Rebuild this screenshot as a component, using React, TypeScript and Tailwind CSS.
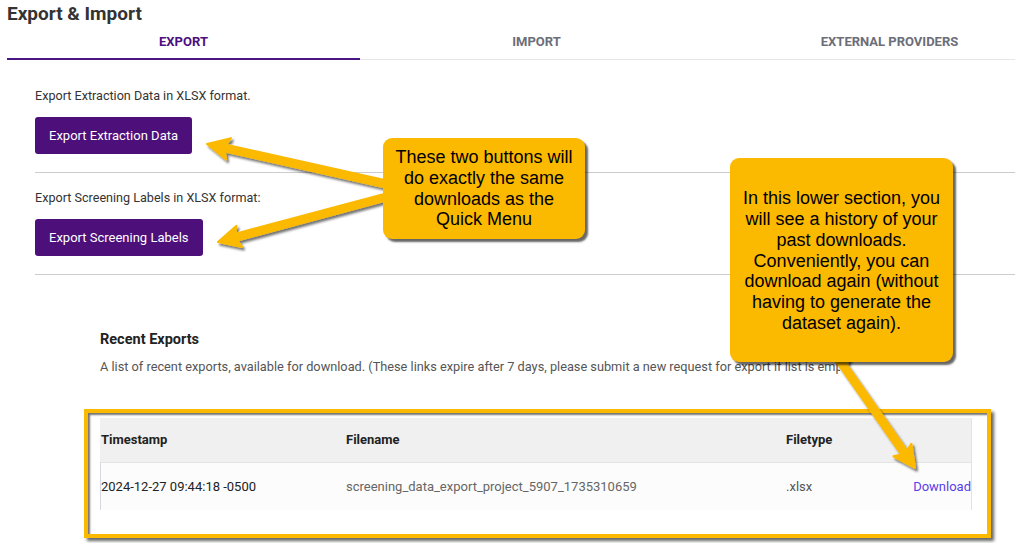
import React from "react";

const YELLOW = "#fbb900";

function arrowPoints(x1: number, y1: number, x2: number, y2: number, w = 3.5, hw = 11, hl = 19) {
  const len = Math.hypot(x2 - x1, y2 - y1);
  const dx = (x2 - x1) / len;
  const dy = (y2 - y1) / len;
  const nx = -dy;
  const ny = dx;
  const bx = x2 - dx * hl;
  const by = y2 - dy * hl;
  const pts = [
    [x1 + nx * w, y1 + ny * w],
    [bx + nx * w, by + ny * w],
    [bx + nx * hw - dx * 3, by + ny * hw - dy * 3],
    [x2, y2],
    [bx - nx * hw - dx * 3, by - ny * hw - dy * 3],
    [bx - nx * w, by - ny * w],
    [x1 - nx * w, y1 - ny * w],
  ];
  return pts.map((p) => `${p[0].toFixed(1)},${p[1].toFixed(1)}`).join(" ");
}

function Arrows() {
  return (
    <svg className="absolute left-0 top-0 pointer-events-none" width={1015} height={543}>
      <defs>
        <filter id="sh" x="-20%" y="-20%" width="140%" height="140%">
          <feDropShadow dx="2" dy="2.5" stdDeviation="1.2" floodColor="#000" floodOpacity="0.55" />
        </filter>
      </defs>
      <g filter="url(#sh)" fill={YELLOW} stroke={YELLOW} strokeWidth={2} strokeLinejoin="round">
        <polygon points={arrowPoints(386, 184, 207, 144)} />
        <polygon points={arrowPoints(386, 197, 218, 242)} />
        <polygon points={arrowPoints(838, 358, 915, 468)} />
        <polygon points="834,358 850,358 844,369" />
      </g>
    </svg>
  );
}

function Callout({ className, lines }: { className: string; lines: string[] }) {
  return (
    <div
      className={`absolute flex flex-col items-center justify-center rounded-[9px] bg-[#fbb900] text-[18px] leading-[20.8px] text-black shadow-[3px_3px_2px_rgba(0,0,0,0.6)] font-['Liberation_Sans',Arial,sans-serif] text-center ${className}`}
    >
      {lines.map((l) => (
        <div key={l}>{l}</div>
      ))}
    </div>
  );
}

export default function App() {
  return (
    <div className="relative w-[1015px] h-[543px] overflow-hidden bg-white font-['Roboto',sans-serif] text-[#333]">
      <h1 className="px-[7px] pt-[3px] text-[19px] leading-[22px] font-bold text-[#333]">Export &amp; Import</h1>

      <div className="ml-[7px] flex w-[1059px] border-b border-[#e6e6e6] h-[35px] text-[13px] font-bold uppercase">
        <div className="w-[353px] flex items-center justify-center text-[#4b0f80] border-b-2 border-[#4b1583] -mb-px">Export</div>
        <div className="w-[353px] flex items-center justify-center text-[#6b6e78]">Import</div>
        <div className="w-[353px] flex items-center justify-center text-[#6b6e78]">External Providers</div>
      </div>

      <div className="pl-[35px]">
        <p className="mt-[27px] text-[12.6px] leading-[18px]">Export Extraction Data in XLSX format.</p>
        <button className="mt-[12px] h-[37px] px-[14px] rounded-[3px] bg-[#4d0f7a] text-white text-[13px] font-normal">
          Export Extraction Data
        </button>
        <div className="mt-[18px] border-t border-[#cccccc]" />
        <p className="mt-[16px] text-[12.6px] leading-[18px]">Export Screening Labels in XLSX format:</p>
        <button className="mt-[12px] h-[37px] px-[14px] rounded-[3px] bg-[#4d0f7a] text-white text-[13px] font-normal">
          Export Screening Labels
        </button>
        <div className="mt-[18px] border-t border-[#cccccc]" />

        <div className="pl-[65px] pr-[43px]">
          <h2 className="mt-[55px] text-[14.5px] leading-[20px] font-bold text-[#222]">Recent Exports</h2>
          <p className="mt-[8px] w-[740px] overflow-hidden text-[12.75px] leading-[18px] text-[#555] whitespace-nowrap">
            A list of recent exports, available for download. (These links expire after 7 days, please submit a new request for export if list is empty.)
          </p>

          <div className="mt-[42px] text-[13px]">
            <div className="grid grid-cols-[245px_440px_1fr_auto] items-center h-[44px] bg-[#f0f0f0] border-r border-[#e3e3e3] font-bold text-[#222] pl-px">
              <div>Timestamp</div>
              <div>Filename</div>
              <div>Filetype</div>
              <div />
            </div>
            <div className="grid grid-cols-[245px_440px_1fr_auto] items-center h-[48px] bg-[#fcfcfc] border-t border-[#e4e4e4] border-l border-r border-l-[#d8d8e0] border-r-[#e3e3e3]">
              <div className="text-[#222]">2024-12-27 09:44:18 -0500</div>
              <div className="text-[#666]">screening_data_export_project_5907_1735310659</div>
              <div className="text-[#555]">.xlsx</div>
              <a className="text-[#5a3de8]">Download</a>
            </div>
          </div>
        </div>
      </div>

      <div className="absolute left-[84px] top-[409px] w-[907px] h-[129px] border-4 border-[#fbb900] shadow-[3px_3px_3px_rgba(0,0,0,0.6),inset_2px_2px_2px_rgba(0,0,0,0.55)]" />

      <Arrows />

      <Callout
        className="left-[383px] top-[138px] w-[202px] h-[101px]"
        lines={["These two buttons will", "do exactly the same", "downloads as the", "Quick Menu"]}
      />
      <Callout
        className="left-[730px] top-[158px] w-[223px] h-[204px] pt-[2px]"
        lines={[
          "In this lower section, you",
          "will see a history of your",
          "past downloads.",
          "Conveniently, you can",
          "download again (without",
          "having to generate the",
          "dataset again).",
        ]}
      />
    </div>
  );
}
